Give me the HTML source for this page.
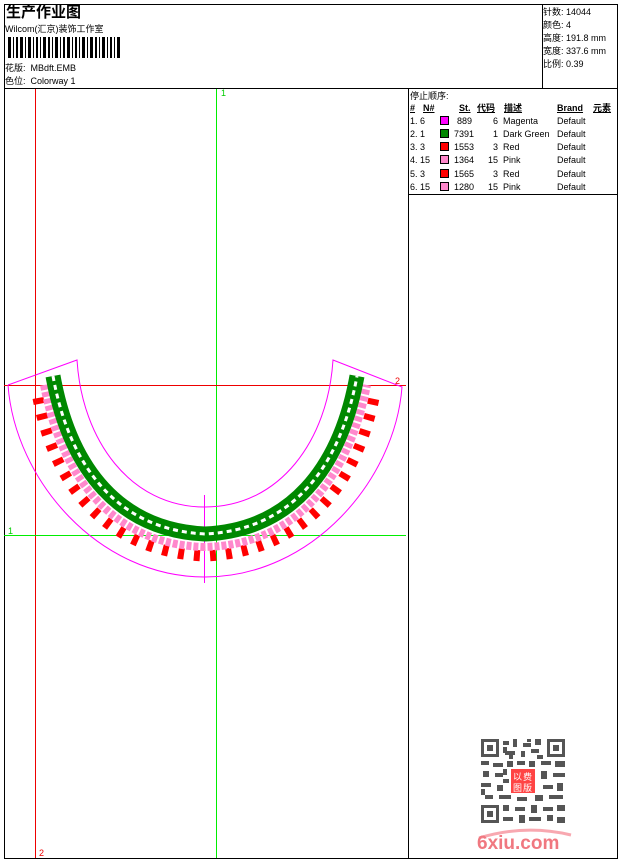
<!DOCTYPE html>
<html><head><meta charset="utf-8"><style>
body{margin:0;width:620px;height:860px;background:#fff;position:relative;overflow:hidden;font-family:"Liberation Sans","Noto Sans CJK SC",sans-serif;font-size:9px;color:#000}
.a{position:absolute;white-space:nowrap;line-height:10px}
.b{position:absolute;background:#000}
</style></head><body>
<div class="b" style="left:4px;top:4px;width:614px;height:1px"></div>
<div class="b" style="left:4px;top:4px;width:1px;height:855px"></div>
<div class="b" style="left:617px;top:4px;width:1px;height:855px"></div>
<div class="b" style="left:4px;top:858px;width:614px;height:1px"></div>
<div class="b" style="left:4px;top:88px;width:614px;height:1px"></div>
<div class="b" style="left:542px;top:4px;width:1px;height:84px"></div>
<div class="b" style="left:408px;top:88px;width:1px;height:771px"></div>
<div class="b" style="left:408px;top:194px;width:210px;height:1px"></div>

<div class="a" style="left:6px;top:4px;font-size:15px;font-weight:bold;line-height:17px">生产作业图</div>
<div class="a" style="left:5px;top:24px">Wilcom(汇京)装饰工作室</div>
<svg style="position:absolute;left:8px;top:37px" width="114" height="21">
<g fill="#000">
<rect x="0" y="0" width="3" height="21"/><rect x="5" y="0" width="1" height="21"/><rect x="8" y="0" width="2" height="21"/><rect x="12" y="0" width="3" height="21"/><rect x="17" y="0" width="1" height="21"/><rect x="20" y="0" width="3" height="21"/><rect x="25" y="0" width="1" height="21"/><rect x="28" y="0" width="2" height="21"/><rect x="32" y="0" width="1" height="21"/><rect x="35" y="0" width="3" height="21"/><rect x="40" y="0" width="2" height="21"/><rect x="44" y="0" width="1" height="21"/><rect x="47" y="0" width="3" height="21"/><rect x="52" y="0" width="1" height="21"/><rect x="55" y="0" width="2" height="21"/><rect x="59" y="0" width="3" height="21"/><rect x="64" y="0" width="1" height="21"/><rect x="67" y="0" width="2" height="21"/><rect x="71" y="0" width="1" height="21"/><rect x="74" y="0" width="3" height="21"/><rect x="79" y="0" width="1" height="21"/><rect x="82" y="0" width="3" height="21"/><rect x="87" y="0" width="2" height="21"/><rect x="91" y="0" width="1" height="21"/><rect x="94" y="0" width="3" height="21"/><rect x="99" y="0" width="1" height="21"/><rect x="102" y="0" width="2" height="21"/><rect x="106" y="0" width="1" height="21"/><rect x="109" y="0" width="3" height="21"/>
</g></svg>
<div class="a" style="left:5px;top:63px">花版:&nbsp; MBdft.EMB</div>
<div class="a" style="left:5px;top:76px">色位:&nbsp; Colorway 1</div>

<div class="a" style="left:543px;top:7px">针数: 14044</div>
<div class="a" style="left:543px;top:20px">颜色: 4</div>
<div class="a" style="left:543px;top:33px">高度: 191.8 mm</div>
<div class="a" style="left:543px;top:46px">宽度: 337.6 mm</div>
<div class="a" style="left:543px;top:59px">比例: 0.39</div>

<div class="a" style="left:410px;top:91px">停止顺序:</div>
<div class="a" style="left:410px;top:103px;font-weight:bold;text-decoration:underline">#</div>
<div class="a" style="left:423px;top:103px;font-weight:bold;text-decoration:underline">N#</div>
<div class="a" style="left:459px;top:103px;font-weight:bold;text-decoration:underline">St.</div>
<div class="a" style="left:477px;top:103px;font-weight:bold;text-decoration:underline">代码</div>
<div class="a" style="left:504px;top:103px;font-weight:bold;text-decoration:underline">描述</div>
<div class="a" style="left:557px;top:103px;font-weight:bold;text-decoration:underline">Brand</div>
<div class="a" style="left:593px;top:103px;font-weight:bold;text-decoration:underline">元素</div>

<div style="position:absolute;left:410px;top:116px">
<div class="a" style="top:0">1. 6</div><div class="a" style="top:13px">2. 1</div><div class="a" style="top:26px">3. 3</div><div class="a" style="top:39px">4. 15</div><div class="a" style="top:53px">5. 3</div><div class="a" style="top:66px">6. 15</div>
<div style="position:absolute;left:30px;top:0;width:7px;height:7px;border:1px solid #000;background:#f0f"></div>
<div style="position:absolute;left:30px;top:13px;width:7px;height:7px;border:1px solid #000;background:#080"></div>
<div style="position:absolute;left:30px;top:26px;width:7px;height:7px;border:1px solid #000;background:#f00"></div>
<div style="position:absolute;left:30px;top:39px;width:7px;height:7px;border:1px solid #000;background:#f8c"></div>
<div style="position:absolute;left:30px;top:53px;width:7px;height:7px;border:1px solid #000;background:#f00"></div>
<div style="position:absolute;left:30px;top:66px;width:7px;height:7px;border:1px solid #000;background:#f8c"></div>
<div class="a" style="left:46px;top:0;width:16px;text-align:right">889</div><div class="a" style="left:44px;top:13px">7391</div><div class="a" style="left:44px;top:26px">1553</div><div class="a" style="left:44px;top:39px">1364</div><div class="a" style="left:44px;top:53px">1565</div><div class="a" style="left:44px;top:66px">1280</div>
<div class="a" style="left:76px;top:0;width:12px;text-align:right">6</div><div class="a" style="left:76px;top:13px;width:12px;text-align:right">1</div><div class="a" style="left:76px;top:26px;width:12px;text-align:right">3</div><div class="a" style="left:76px;top:39px;width:12px;text-align:right">15</div><div class="a" style="left:76px;top:53px;width:12px;text-align:right">3</div><div class="a" style="left:76px;top:66px;width:12px;text-align:right">15</div>
<div class="a" style="left:93px;top:0">Magenta</div><div class="a" style="left:93px;top:13px">Dark Green</div><div class="a" style="left:93px;top:26px">Red</div><div class="a" style="left:93px;top:39px">Pink</div><div class="a" style="left:93px;top:53px">Red</div><div class="a" style="left:93px;top:66px">Pink</div>
<div class="a" style="left:147px;top:0">Default</div><div class="a" style="left:147px;top:13px">Default</div><div class="a" style="left:147px;top:26px">Default</div><div class="a" style="left:147px;top:39px">Default</div><div class="a" style="left:147px;top:53px">Default</div><div class="a" style="left:147px;top:66px">Default</div>
</div>

<svg style="position:absolute;left:0;top:0" width="620" height="860">
<g shape-rendering="crispEdges">
<rect x="35" y="89" width="1" height="769" fill="#e00"/>
<rect x="216" y="89" width="1" height="769" fill="#0e0"/>
<rect x="4" y="385" width="402" height="1" fill="#e00"/>
<rect x="4" y="535" width="402" height="1" fill="#0e0"/>
</g>
<text x="221" y="96" fill="#0c0" font-size="9" font-family="Liberation Sans">1</text>
<text x="395" y="384" fill="#e00" font-size="9" font-family="Liberation Sans">2</text>
<text x="8" y="534" fill="#0c0" font-size="9" font-family="Liberation Sans">1</text>
<text x="39" y="856" fill="#e00" font-size="9" font-family="Liberation Sans">2</text>
<g fill="none" stroke="#f0f" stroke-width="1">
<path d="M8,385 L77,360 C82,440 130,507 205,507 C280,507 328,440 333,360 L402,387 C395,480 312,577 205,577 C98,577 15,480 8,385"/>
<line x1="204.5" y1="495" x2="204.5" y2="583"/>
</g>
<path d="M38,398 C55,490 110,552 205,556 C300,552 355,490 374,398" fill="none" stroke="#f00" stroke-width="11" stroke-dasharray="6,10"/>
<path d="M44,385 C62,480 115,545 205,547 C295,545 348,480 367,385" fill="none" stroke="#f8c" stroke-width="8" stroke-dasharray="5,2"/>
<path d="M53,376 C70,470 120,530 205,534 C290,530 340,470 357,376" fill="none" stroke="#080" stroke-width="15"/>
<path d="M53,376 C70,470 120,530 205,534 C290,530 340,470 357,376" fill="none" stroke="#fff" stroke-width="3" stroke-dasharray="5,4"/>
</svg>

<svg style="position:absolute;left:481px;top:739px" width="84" height="84">
<g fill="#555">
<rect x="0" y="0" width="18" height="18"/><rect x="66" y="0" width="18" height="18"/><rect x="0" y="66" width="18" height="18"/>
</g>
<g fill="#fff"><rect x="3" y="3" width="12" height="12"/><rect x="69" y="3" width="12" height="12"/><rect x="3" y="69" width="12" height="12"/></g>
<g fill="#555"><rect x="6" y="6" width="6" height="6"/><rect x="72" y="6" width="6" height="6"/><rect x="6" y="72" width="6" height="6"/></g>
<g fill="#555">
<rect x="22" y="2" width="6" height="4"/><rect x="32" y="0" width="4" height="8"/><rect x="42" y="4" width="8" height="4"/><rect x="54" y="0" width="6" height="6"/><rect x="22" y="8" width="4" height="6"/><rect x="46" y="0" width="4" height="3"/>
<rect x="24" y="12" width="10" height="4"/><rect x="40" y="12" width="4" height="6"/><rect x="50" y="10" width="8" height="4"/><rect x="28" y="16" width="4" height="4"/><rect x="56" y="16" width="6" height="4"/>
<rect x="0" y="22" width="8" height="4"/><rect x="12" y="24" width="10" height="4"/><rect x="26" y="22" width="6" height="6"/><rect x="36" y="22" width="8" height="4"/><rect x="48" y="22" width="6" height="6"/><rect x="60" y="22" width="10" height="4"/><rect x="74" y="22" width="10" height="6"/>
<rect x="2" y="32" width="6" height="6"/><rect x="14" y="34" width="8" height="4"/><rect x="22" y="30" width="4" height="6"/><rect x="60" y="32" width="6" height="8"/><rect x="72" y="34" width="12" height="4"/>
<rect x="0" y="44" width="10" height="4"/><rect x="16" y="46" width="6" height="6"/><rect x="22" y="40" width="6" height="4"/><rect x="62" y="46" width="10" height="4"/><rect x="76" y="44" width="6" height="8"/>
<rect x="4" y="56" width="8" height="4"/><rect x="18" y="56" width="12" height="4"/><rect x="36" y="58" width="10" height="4"/><rect x="54" y="56" width="8" height="6"/><rect x="68" y="56" width="14" height="4"/><rect x="0" y="50" width="4" height="6"/>
<rect x="22" y="66" width="6" height="6"/><rect x="34" y="68" width="10" height="4"/><rect x="50" y="66" width="6" height="8"/><rect x="62" y="68" width="10" height="4"/><rect x="76" y="66" width="8" height="6"/>
<rect x="22" y="78" width="10" height="4"/><rect x="38" y="76" width="6" height="8"/><rect x="48" y="78" width="12" height="4"/><rect x="66" y="76" width="6" height="6"/><rect x="76" y="78" width="8" height="6"/>
</g>
<rect x="30" y="30" width="24" height="24" fill="#f44"/>
<text x="32" y="41" fill="#fff" font-size="9" font-family="Noto Sans CJK SC">以</text><text x="42" y="41" fill="#fff" font-size="9" font-family="Noto Sans CJK SC">费</text>
<text x="32" y="52" fill="#fff" font-size="9" font-family="Noto Sans CJK SC">图</text><text x="42" y="52" fill="#fff" font-size="9" font-family="Noto Sans CJK SC">版</text>
</svg>
<svg style="position:absolute;left:475px;top:826px" width="100" height="26">
<path d="M4,12 Q50,-2 96,9" fill="none" stroke="#f8a8b0" stroke-width="3"/>
<text x="2" y="23" fill="#f07880" font-size="19" font-weight="bold" font-family="Liberation Sans">6xiu.com</text>
</svg>
</body></html>
